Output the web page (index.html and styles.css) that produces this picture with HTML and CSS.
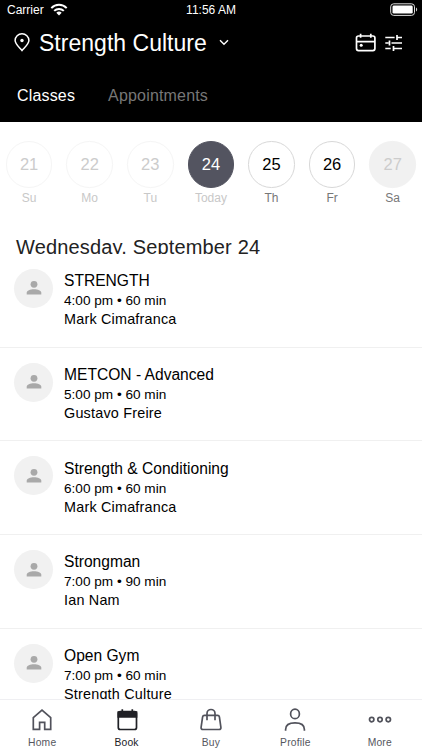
FILE: index.html
```html
<!DOCTYPE html>
<html lang="en">
<head>
<meta charset="utf-8">
<title>Strength Culture</title>
<link rel="stylesheet" href="styles.css">
</head>
<body>
<svg class="defs" width="0" height="0"><symbol id="person" viewBox="0 0 16 16"><circle cx="8" cy="4.3" r="3.4"/><path d="M.7 14.6V12.8C.7 10.4 4.2 9.2 8 9.2s7.300 1.200 7.300 3.600v1.800z"/></symbol></svg>
<div class="app">
  <header class="header">
    <div class="status">
      <div class="carrier">Carrier
        <svg width="18" height="13" viewBox="0 0 18 13" fill="none" stroke="#fff" stroke-width="2"><path d="M1.300 5.100a10.800 10.800 0 0 1 15.400 0M4.200 7.900a6.800 6.800 0 0 1 9.600 0"/><path d="M6.300 9.700a3.900 3.900 0 0 1 5.400 0L9 12.500z" fill="#fff" stroke="none"/></svg>
      </div>
      <div class="time">11:56 AM</div>
      <svg class="battery" width="28" height="14" viewBox="0 0 28 14"><rect x=".7" y=".8" width="23.800" height="11.600" rx="3" fill="none" stroke="#ddd"/><rect x="2.500" y="2.600" width="20.200" height="8" rx="1.300" fill="#fff"/><path d="M26 4.600c1.600.8 1.600 3.200 0 4z" fill="#ccc"/></svg>
    </div>
    <div class="location">
      <svg width="16" height="19" viewBox="0 0 16 19" fill="none" stroke="#fff" stroke-width="1.500"><path d="M8 17.500C5.500 14.500 1.100 11 1.100 7.500a6.900 6.700 0 0 1 13.800 0c0 3.500-4.400 7-6.900 10z"/><circle cx="8" cy="7.500" r="1.700" fill="#fff" stroke="none"/></svg>
      <h1>Strength Culture</h1>
      <svg class="chevron" width="10" height="7" viewBox="0 0 10 7" fill="none" stroke="#fff" stroke-width="1.400"><path d="M1 1.200l4 4 4-4"/></svg>
      <div class="actions">
        <svg width="22" height="20" viewBox="0 0 22 20" fill="none" stroke="#fff" stroke-width="1.700"><rect x="1.500" y="3" width="18.400" height="14.600" rx="2"/><path d="M1.500 8.700h18.400M5.600.8v4M15.800.8v4"/><circle cx="6.200" cy="12.300" r="1.500" fill="#fff" stroke="none"/></svg>
        <svg width="18" height="18" viewBox="0 0 18 18" fill="none" stroke="#fff" stroke-width="1.700"><path d="M.3 3.500h9.300M12 3.500h5M12 .9v5.200M.3 9h3.200M6.500 9H17M4.500 6.400v5.200M.3 14.500h5.400M8.500 14.500H17M8.500 11.900v5.200"/></svg>
      </div>
    </div>
    <nav class="modes"><span class="selected">Classes</span><span>Appointments</span></nav>
  </header>

  <section class="week">
    <div class="day past"><b>21</b><span>Su</span></div>
    <div class="day past"><b>22</b><span>Mo</span></div>
    <div class="day past"><b>23</b><span>Tu</span></div>
    <div class="day today"><b>24</b><span>Today</span></div>
    <div class="day"><b>25</b><span>Th</span></div>
    <div class="day"><b>26</b><span>Fr</span></div>
    <div class="day closed"><b>27</b><span>Sa</span></div>
  </section>
  <h2 class="date">Wednesday, September 24</h2>

  <main class="list">
    <article class="row"><div class="avatar"><svg><use href="#person"/></svg></div><div><h3>STRENGTH</h3><p class="when">4:00 pm • 60 min</p><p class="who">Mark Cimafranca</p></div></article>
    <article class="row"><div class="avatar"><svg><use href="#person"/></svg></div><div><h3>METCON - Advanced</h3><p class="when">5:00 pm • 60 min</p><p class="who">Gustavo Freire</p></div></article>
    <article class="row"><div class="avatar"><svg><use href="#person"/></svg></div><div><h3>Strength &amp; Conditioning</h3><p class="when">6:00 pm • 60 min</p><p class="who">Mark Cimafranca</p></div></article>
    <article class="row"><div class="avatar"><svg><use href="#person"/></svg></div><div><h3>Strongman</h3><p class="when">7:00 pm • 90 min</p><p class="who">Ian Nam</p></div></article>
    <article class="row"><div class="avatar"><svg><use href="#person"/></svg></div><div><h3>Open Gym</h3><p class="when">7:00 pm • 60 min</p><p class="who">Strength Culture</p></div></article>
  </main>

  <nav class="tabs">
    <div class="tab"><svg viewBox="0 0 24 24"><path d="M3.300 9.700L12 2.200l8.700 7.500V21.300h-6V14.400H9.600v6.900H3.300z"/></svg>Home</div>
    <div class="tab active"><svg viewBox="0 0 24 24"><rect x="3.300" y="3.500" width="18.200" height="18" rx="2"/><path d="M3.300 4h18.200v5H3.300z" fill="#202126"/><path d="M7.300 1.200v4M17.300 1.200v4"/></svg>Book</div>
    <div class="tab"><svg viewBox="0 0 24 24"><path d="M5.400 7.300h13.200c1 0 1.600.5 1.800 1.500l1.500 10.500c.2 1.300-.5 2.200-1.800 2.200H3.900c-1.300 0-2-.9-1.800-2.200L3.600 8.800c.2-1 .8-1.500 1.800-1.500z"/><path d="M8 12.200V5.500a4 4 0 0 1 8 0v6.700"/></svg>Buy</div>
    <div class="tab"><svg viewBox="0 0 24 24"><ellipse cx="12" cy="5.900" rx="4.400" ry="4.800"/><path d="M2.600 22.800v-1.300c0-4 3.500-6.600 9.400-6.600s9.400 2.600 9.400 6.600v1.300"/></svg>Profile</div>
    <div class="tab"><svg viewBox="0 0 24 24"><circle cx="3.700" cy="11.600" r="2.200"/><circle cx="12" cy="11.600" r="2.200"/><circle cx="20.300" cy="11.600" r="2.200"/></svg>More</div>
  </nav>
</div>
</body>
</html>
```

FILE: styles.css
```css
* { box-sizing: border-box; margin: 0; padding: 0; }
body { background: #fff; color: #000; font-family: "Liberation Sans", Arial, sans-serif; overflow: hidden; }
h1, h2, h3, b { font-weight: 400; }
svg { display: block; flex: none; }
.defs { display: none; }
.app { width: 422px; height: 750px; display: flex; flex-direction: column; }

.header { height: 122px; flex: none; background: #000; color: #fff; }
.status { height: 20px; display: grid; grid-template-columns: 1fr auto 1fr; align-items: center; padding: 0 4px 0 7px; font-size: 12px; }
.carrier { display: flex; align-items: center; gap: 6px; }
.carrier svg { margin-top: -2px; }
.time { margin-right: 3px; }
.battery { justify-self: end; }
.location { height: 45px; display: flex; align-items: center; padding: 0 19px 0 14px; }
.location h1 { margin-left: 9px; font-size: 23px; letter-spacing: 0.02px; line-height: 28px; }
.chevron { margin-left: 12px; }
.actions { display: flex; align-items: center; gap: 8px; margin-left: auto; }
.modes { display: flex; gap: 33px; padding: 21px 17px 0; font-size: 16px; line-height: 20px; letter-spacing: 0.17px; color: #777; }
.modes .selected { color: #fff; }

.week { display: grid; grid-template-columns: repeat(7, 60.6px); height: 113px; flex: none; padding-top: 19.4px; margin-left: -1.200px; }
.day { display: flex; flex-direction: column; align-items: center; color: #000; }
.day b { width: 46.5px; height: 46.5px; border: 1px solid #d8d8d8; border-radius: 50%; font-size: 16.5px; line-height: 45px; text-align: center; }
.day span { margin-top: 2px; font-size: 12px; line-height: 16px; color: #777; }
.past b { border-color: #f5f5f5; color: #ccc; }
.past span, .today span { color: #c8c8c8; }
.today b { background: #535460; border-color: #535460; color: #fff; }
.closed b { background: #f1f1f1; border-color: #f1f1f1; color: #ccc; }
.date { height: 18.8px; flex: none; overflow: hidden; padding-left: 16px; font-size: 20px; line-height: 24px; letter-spacing: 0.16px; color: #222; }

.list { flex: 1; min-height: 0; overflow: hidden; }
.row { display: flex; gap: 11px; height: 93.75px; padding: 15px 14px 0; border-bottom: 1px solid #f0f0f0; }
.avatar { width: 39px; height: 39px; flex: none; display: grid; place-items: center; border-radius: 50%; background: #f1f1f1; }
.avatar svg { width: 16px; height: 16px; fill: #a9a9a9; }
.row h3 { padding-top: 2.25px; font-size: 15.600px; line-height: 20px; }
.row .when { font-size: 13.600px; line-height: 19px; }
.row .who { font-size: 14.400px; line-height: 19px; letter-spacing: 0.2px; }

.tabs { height: 51px; flex: none; display: grid; grid-template-columns: repeat(5, 84.4px); border-top: 1px solid #efeff2; background: #fff; }
.tab { display: flex; flex-direction: column; align-items: center; gap: 5px; padding-top: 8px; font-size: 10.300px; line-height: 12px; letter-spacing: 0.2px; color: #55565e; }
.tab svg { width: 24px; height: 24px; fill: none; stroke: #51525b; stroke-width: 1.700; }
.tab.active { color: #202126; }
.tab.active svg { stroke: #202126; }
```
